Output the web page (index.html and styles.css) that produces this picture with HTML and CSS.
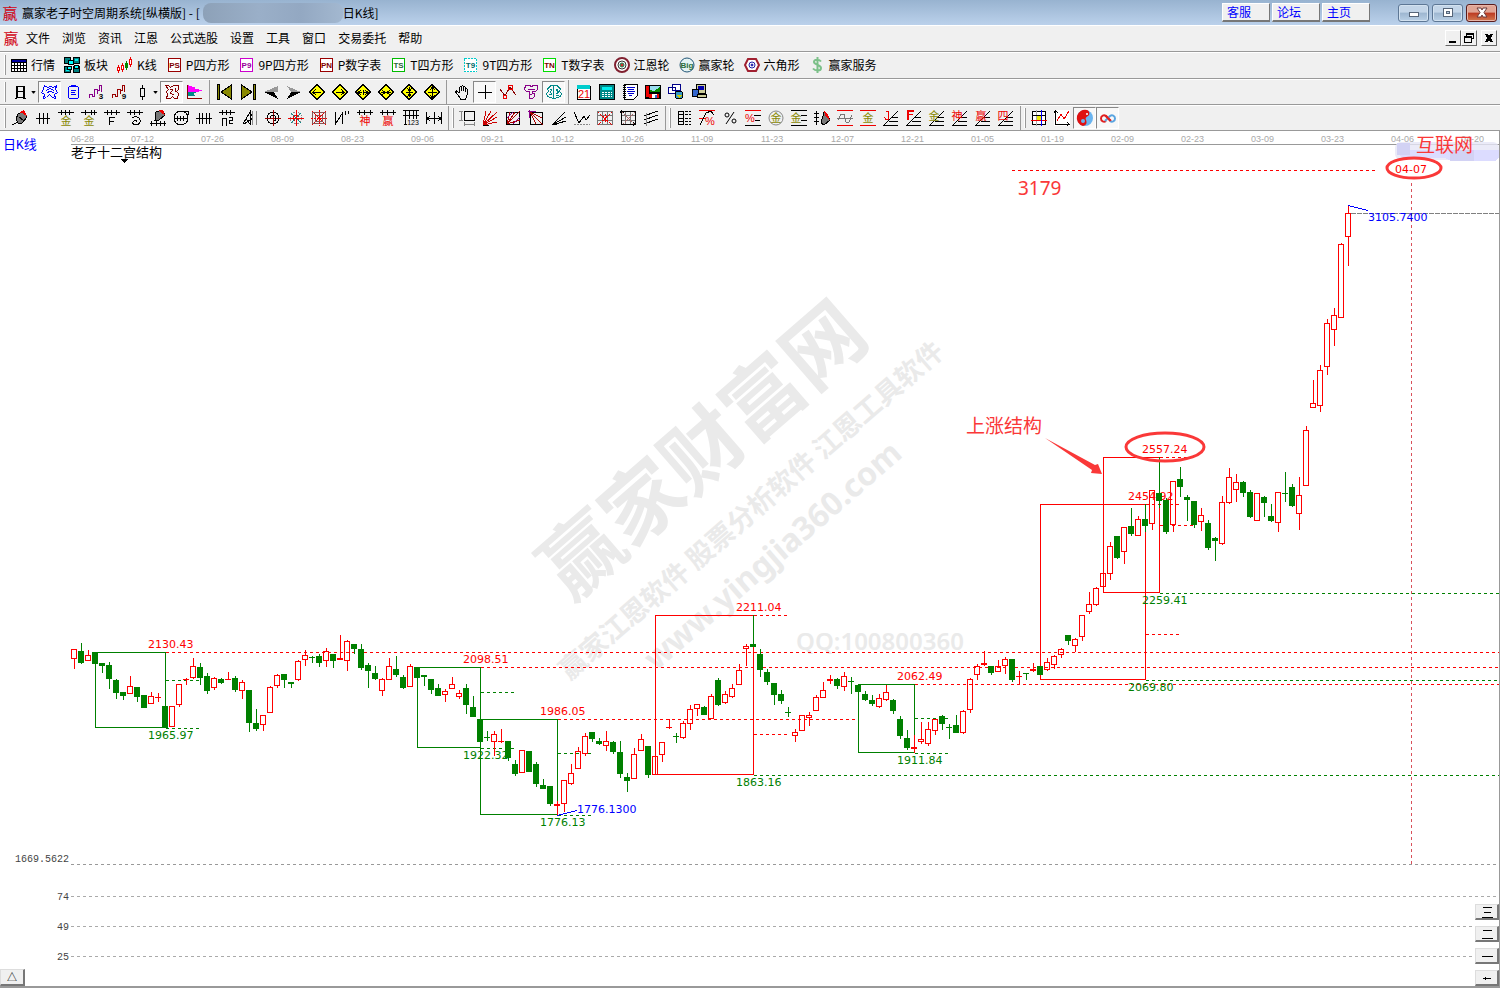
FILE: index.html
```html
<!DOCTYPE html>
<html lang="zh-CN">

<head>
    <meta charset="utf-8">
    <title>赢家老子时空周期系统[纵横版]</title>
    <link rel="stylesheet" href="styles.css">
</head>

<body>
    <!-- 标题栏 -->
    <header class="titlebar">
        <span class="logo">赢</span>
        <h1>赢家老子时空周期系统[纵横版] - [<span class="mask"></span>日K线]</h1>
        <div class="links">
            <button>客服</button>
            <button>论坛</button>
            <button>主页</button>
        </div>
        <div class="winctl">
            <button aria-label="最小化"><svg class="ic" viewBox="0 0 16 16"><rect x="3.5" y="7.5" width="9" height="4" rx="1" fill="#fff" stroke="#566579"/></svg></button>
            <button aria-label="还原"><svg class="ic" viewBox="0 0 16 16"><path d="M3.500 3.500h9v8h-9zM6.500 6.500h3v2h-3z" fill="#fff" fill-rule="evenodd" stroke="#566579"/></svg></button>
            <button class="close" aria-label="关闭"><svg class="ic smooth" viewBox="0 0 16 16"><path d="M3 3h4l1 2 1-2h4l-3 4.500 3 4.500H9L8 10l-1 2H3l3-4.500z" fill="#fff" stroke="#6b3a3a"/></svg></button>
        </div>
    </header>

    <!-- 菜单 -->
    <nav class="menubar">
        <span class="logo">赢</span>
        <a href="#">文件</a>
        <a href="#">浏览</a>
        <a href="#">资讯</a>
        <a href="#">江恩</a>
        <a href="#">公式选股</a>
        <a href="#">设置</a>
        <a href="#">工具</a>
        <a href="#">窗口</a>
        <a href="#">交易委托</a>
        <a href="#">帮助</a>
        <div class="mdi">
            <button aria-label="最小化"><svg viewBox="0 0 12 12"><path d="M2 9h7v2H2z"/></svg></button>
            <button aria-label="还原"><svg viewBox="0 0 12 12"><path d="M3 1h8v6H9v4H1V4h2zM4 3v1h5v2h1V3zM2 6v4h6V6z" fill-rule="evenodd"/></svg></button>
            <button aria-label="关闭"><svg viewBox="0 0 12 12"><path d="M2 2h3l1 2 1-2h3L8 6l2 4H7L6 8l-1 2H2l2-4z"/></svg></button>
        </div>
    </nav>

    <!-- 功能栏 -->
    <div class="toolbar named">
        <i class="grip"></i>
        <button><svg class="ic" viewBox="0 0 16 16"><path d="M0 2h16v13H0z" fill="#000"/><path d="M1 3h14v2H1z" fill="#0000a0"/><path d="M1 6h2v2H1zM4 6h2v2H4zM7 6h2v2H7zM10 6h2v2h-2zM13 6h2v2h-2zM1 9h2v2H1zM4 9h2v2H4zM7 9h2v2H7zM10 9h2v2h-2zM13 9h2v2h-2zM1 12h2v2H1zM4 12h2v2H4zM7 12h2v2H7zM10 12h2v2h-2zM13 12h2v2h-2z" fill="#fff"/></svg>行情</button>
        <button><svg class="ic" viewBox="0 0 16 16"><path d="M.5.5h6v6h-6zM9.500.5h6v6h-6zM.5 9.500h6v6h-6zM9.500 9.500h6v6h-6z" fill="#008080" stroke="#000"/><path d="M4.500 3.500h5v4h-5zM3.500 9.500h4v3h-4zM10.500 8.500h4v3h-4z" fill="#0ff" stroke="#000"/><path d="M11 2h3v2h-3zM2 13h3v1H2z" fill="#0ee"/></svg>板块</button>
        <button><svg class="ic" viewBox="0 0 16 16"><path d="M1.500 8v8M5.500 6v9M13.500 0v10" stroke="#e00"/><path d="M9.500 4v9" stroke="#080"/><path d="M.5 10.500h2v3h-2zM4.500 8.500h2v4h-2zM12.500 2.500h2v5h-2z" fill="#fff" stroke="#e00"/><path d="M8 6h3v5H8z" fill="#080"/></svg>K线</button>
        <button><svg class="ic" viewBox="0 0 16 16"><path d="M2.500 1.500h12v13h-12z" fill="#fff" stroke="#900"/><text x="8.500" y="11" class="t-maroon">PS</text></svg>P四方形</button>
        <button><svg class="ic" viewBox="0 0 16 16"><path d="M2.500 1.500h12v13h-12z" fill="#fff" stroke="#c0c"/><text x="8.500" y="11" class="t-purple">P9</text></svg>9P四方形</button>
        <button><svg class="ic" viewBox="0 0 16 16"><path d="M2.500 1.500h12v13h-12z" fill="#fff" stroke="#900"/><text x="8.500" y="11" class="t-maroon">PN</text></svg>P数字表</button>
        <button><svg class="ic" viewBox="0 0 16 16"><path d="M2.500 1.500h12v13h-12z" fill="#fff" stroke="#0b0"/><text x="8.500" y="11" class="t-green">TS</text></svg>T四方形</button>
        <button><svg class="ic" viewBox="0 0 16 16"><path d="M2.500 1.500h12v13h-12z" fill="#fff" stroke="#0cc" stroke-dasharray="2 1"/><text x="8.500" y="11" class="t-teal">T9</text></svg>9T四方形</button>
        <button><svg class="ic" viewBox="0 0 16 16"><path d="M2.500 1.500h12v13h-12z" fill="#fff" stroke="#0d0"/><text x="8.500" y="11" class="t-maroon">TN</text></svg>T数字表</button>
        <button><svg class="ic smooth" viewBox="0 0 16 16"><circle cx="8" cy="8" r="7" fill="#fff" stroke="#802030" stroke-width="2"/><circle cx="8" cy="8" r="4" stroke="#333"/><circle cx="8" cy="8" r="2" fill="#c33" stroke="#185"/></svg>江恩轮</button>
        <button><svg class="ic smooth" viewBox="0 0 16 16"><circle cx="8" cy="8" r="7" fill="#e5f3f3" stroke="#257"/><text x="8" y="11" class="t-green">Big</text></svg>赢家轮</button>
        <button><svg class="ic smooth" viewBox="0 0 16 16"><path d="M4 2h8l3 6-3 6H4L1 8z" fill="#fff" stroke="#a02030" stroke-width="2"/><circle cx="8" cy="8" r="3" stroke="#22a"/><circle cx="8" cy="8" r="1" fill="#22a" stroke="#22a"/></svg>六角形</button>
        <button><svg class="ic smooth" viewBox="0 0 16 16"><path d="M12 4.500C10 2 5 2 5 5s7 2.500 7 6-6 3-8 .5M8.500 0v16" stroke="#7cc089" stroke-width="2"/></svg>赢家服务</button>
    </div>

    <!-- 周期与操作 -->
    <div class="toolbar">
        <i class="grip"></i>
        <button aria-label="日线"><svg class="ic" viewBox="0 0 16 16"><path d="M4 2h9v12h1v1h-3v-1H5v1H3v-1h1zM6 3v4h5V3zM6 8v5h5V8z" fill="#000" fill-rule="evenodd"/></svg></button>
        <i class="caret"></i>
        <button class="on" aria-label="叠加"><svg class="ic" viewBox="0 0 16 16"><path d="M2.500 1.500l3 2 3-1 3 1 3-2-1 4 2 3-3 2 1 4-3-1-3-3-3 3-3 1 1-4-3-2 2-3zM4 7c2-3 6-3 8 0M5 9l3-2 4 2" stroke="#00f"/></svg></button>
        <button aria-label="记录"><svg class="ic" viewBox="0 0 16 16"><path d="M4.500 2.500h8l1 1v10l-1 1h-8l-1-1v-10zM6 1.500h5M6 6.500h5M6 8.500h4M6 10.500h5" stroke="#00f"/></svg></button>
        <button aria-label="三均"><svg class="ic" viewBox="0 0 16 16"><path d="M1.500 14v-4h3v2h2V5h3v5M9.500 6h2V1h2v7" stroke="#808"/><text x="13" y="15">3</text></svg></button>
        <button aria-label="九均"><svg class="ic" viewBox="0 0 16 16"><path d="M1.500 14v-4h3v2h2V5h3v5M9.500 6h2V1h2v7" stroke="#900"/><text x="13" y="15">9</text></svg></button>
        <button aria-label="K线样式"><svg class="ic" viewBox="0 0 16 16"><path d="M6.500 4.500h4v8h-4zM8.500 1v3M8.500 13v3"/></svg></button>
        <i class="caret"></i>
        <button class="on" aria-label="复权"><svg class="ic" viewBox="0 0 16 16"><path d="M1.500 1.500h3l2 2 3-2h5v4l-2 2 2 2-1 5h-3l-2-2-2 2h-4l1-4-1-3 2-2zM6 5l3 1-3 3 4 2M11 4v4" stroke="#800"/></svg></button>
        <button aria-label="筹码"><svg class="ic" viewBox="0 0 16 16"><path d="M1 1l8 3-2 1 9 1-6 2H1z" fill="#f0f"/><path d="M1 8h9l-4 2 2 2H1z" fill="#088"/><path d="M.5 1v13.500H15" stroke="#800"/></svg></button>
        <i class="sep"></i>
        <button aria-label="最前"><svg class="ic" viewBox="0 0 16 16"><path d="M.5.5h2v15h-2zM14.500 1v14L4 8z" fill="#880" stroke="#000"/></svg></button>
        <button aria-label="最后"><svg class="ic" viewBox="0 0 16 16"><path d="M13.500.5h2v15h-2zM1.500 1v14L12 8z" fill="#880" stroke="#000"/></svg></button>
        <button aria-label="后退"><svg class="ic" viewBox="0 0 16 16"><path d="M1 8l14-6v6z" fill="#999"/><path d="M1 8h10l4 7z" fill="#000"/></svg></button>
        <button aria-label="前进"><svg class="ic" viewBox="0 0 16 16"><path d="M1 2l14 6H5z" fill="#999"/><path d="M1 15l14-7H5z" fill="#000"/></svg></button>
        <button aria-label="左移"><svg class="ic" viewBox="0 0 16 16"><path class="dia" d="M8 .5L15.500 8 8 15.500.5 8z"/><path d="M4 8.500h8M7 5L4 8.500 7 11"/></svg></button>
        <button aria-label="右移"><svg class="ic" viewBox="0 0 16 16"><path class="dia" d="M8 .5L15.500 8 8 15.500.5 8z"/><path d="M4 8.500h8M9 5l3 3.500L9 11"/></svg></button>
        <button aria-label="拉宽"><svg class="ic" viewBox="0 0 16 16"><path class="dia" d="M8 .5L15.500 8 8 15.500.5 8z"/><path d="M3 8.500h4M9 8.500h4M6 6L3 8.500 6 11M10 6l3 2.500-3 2.500M8.500 6v5"/></svg></button>
        <button aria-label="收窄"><svg class="ic" viewBox="0 0 16 16"><path class="dia" d="M8 .5L15.500 8 8 15.500.5 8z"/><path d="M3 8.500h10M4 6l3 2.500L4 11M12 6L9 8.500l3 2.500"/></svg></button>
        <button aria-label="压缩"><svg class="ic" viewBox="0 0 16 16"><path class="dia" d="M8 .5L15.500 8 8 15.500.5 8z"/><path d="M8.500 3v10M5 8.500h7M6 4l2.500 3L11 4M6 13l2.500-3 2.500 3"/></svg></button>
        <button aria-label="拉高"><svg class="ic" viewBox="0 0 16 16"><path class="dia" d="M8 .5L15.500 8 8 15.500.5 8z"/><path d="M8.500 3v10M4 8.500h9M6 6l2.500-3L11 6M6 11l2.500 3 2.500-3"/></svg></button>
        <i class="sep"></i>
        <button aria-label="拖动"><svg class="ic" viewBox="0 0 16 16"><path d="M5.500 9V3.500l1-1 1 1V7V2.500l1-1 1 1V7V3.500l1-1 1 1V8V5.500l1-1 1 1V10l-2 5h-5L4 11 1.500 8l1-1L5.500 9"/></svg></button>
        <button class="on" aria-label="十字光标"><svg class="ic" viewBox="0 0 16 16"><path d="M8.500 1v14M1 8.500h14"/></svg></button>
        <button aria-label="画线"><svg class="ic" viewBox="0 0 16 16"><path d="M0 5l5 7 5-9 6 8" stroke="#800"/><path d="M3.500 11.500h3v3h-3zM8.500 1.500h4v4h-4z" stroke="#e00"/></svg></button>
        <button aria-label="标注"><svg class="ic" viewBox="0 0 16 16"><path d="M2.500 1.500h4l2 1 2-1h4v4l-2 2h-3v2h2v3l-2 2h-3v-4h2M2.500 1.500l-1 4 2 2h3v3M5 5h7" stroke="#808"/></svg></button>
        <button class="on" aria-label="智能分析"><svg class="ic" viewBox="0 0 16 16"><path d="M7.500 2l-3-.5-1 2-2 1 1 3-2 2 1 3 3 1 3 1V2M8.500 2l3-.5 1 2 2 1-1 3 2 2-1 3-3 1-3 1M4 5l2 1-2 2 2 2M12 5l-2 1 3 2-3 2M3 10h3M10 11h3" stroke="#088"/></svg></button>
        <i class="sep"></i>
        <button aria-label="日历"><svg class="ic" viewBox="0 0 16 16"><path d="M1.500 2.500h13v13h-13z" fill="#fff" stroke="#000"/><path d="M1 1h13v4H1z" fill="#0cc"/><text x="8" y="14" class="t-red mid">21</text></svg></button>
        <button aria-label="计算器"><svg class="ic" viewBox="0 0 16 16"><path d="M.5.5h15v15H.5z" fill="#088" stroke="#000"/><path d="M3 3h10v3H3z" fill="#0ee"/><path d="M3 8.500h10M3 10.500h10M3 12.500h10" stroke="#fff" stroke-dasharray="2 1"/></svg></button>
        <button aria-label="记事本"><svg class="ic" viewBox="0 0 16 16"><path d="M2.500.5h13v11l-4 4h-9z" fill="#fff" stroke="#000"/><path d="M2 1v14" stroke-width="3" stroke-dasharray="1 1"/><path d="M5 3.500h8M6 5.500h6M5 7.500h8M6 9.500h6M7 11.500h3" stroke="#00c"/></svg></button>
        <button aria-label="保存"><svg class="ic" viewBox="0 0 16 16"><path d="M0 1h16v14H0z" fill="#000"/><path d="M1 2h3v11H1z" fill="#e00"/><path d="M5 2h10v6H5z" fill="#9de"/><path d="M5 6l4 1 6-4v5H5z" fill="#080"/><path d="M4 10h10v4H4z" fill="#e00"/><path d="M7 10h5v4H7z" fill="#fff"/><path d="M10 11h2v3h-2z" fill="#36c"/></svg></button>
        <button aria-label="网络"><svg class="ic" viewBox="0 0 16 16"><path d="M4.500.5h8v6h-8zM.5 3.500h7v6h-7z" fill="#fff" stroke="#008"/><circle cx="11" cy="11" r="4" fill="#39c" stroke="#000"/><path d="M8 11h6l-3 3z" fill="#cc0"/></svg></button>
        <button aria-label="打印"><svg class="ic" viewBox="0 0 16 16"><path d="M5.500.5h9v9h-9z" fill="#cc9" stroke="#000"/><path d="M7 2h6v4H7z" fill="#00a"/><path d="M1.500 5.500h6v7h-6z" fill="#36c" stroke="#000"/><path d="M6.500 10.500h9v3h-9z" fill="#cc9" stroke="#000"/></svg></button>
    </div>

    <!-- 画线工具 -->
    <div class="toolbar">
        <i class="grip"></i>
        <button aria-label="画笔"><svg class="ic" viewBox="0 0 16 16"><path d="M6 4l6-3 3 6-5 6H6L4 9z" fill="#777" stroke="#000"/><path d="M7 3l5-3 3 6-3-1-1-2z" fill="#e00"/><path d="M7 7l4 3M0 15l6-3"/></svg></button>
        <button aria-label="等分"><svg class="ic" viewBox="0 0 16 16"><path d="M1 8.500h14M4.500 3v11M8.500 3v11M12.500 3v11"/></svg></button>
        <button aria-label="黄金周期"><svg class="ic" viewBox="0 0 16 16"><path d="M0 2.500h16M3.500 0v5M7.500 0v5M11.500 0v5"/><text x="8" y="15" class="zh t-olive">金</text></svg></button>
        <button aria-label="黄金分割"><svg class="ic" viewBox="0 0 16 16"><path d="M0 2.500h16M4.500 0v5M10.500 0v5M13.500 0v5"/><text x="8" y="15" class="zh t-olive">金</text></svg></button>
        <button aria-label="斐波那契"><svg class="ic" viewBox="0 0 16 16"><path d="M0 2.500h16M3.500 0v5M7.500 0v5M12.500 0v5M5.500 15V7.500H11M5.500 11.500h4"/></svg></button>
        <button aria-label="螺旋周期"><svg class="ic" viewBox="0 0 16 16"><path d="M0 2.500h16M3.500 0v5M7.500 0v5M12.500 0v5M5 8c4-3 9 0 8 4s-9 3-7 0 5-1 3 0"/></svg></button>
        <button aria-label="周期尺"><svg class="ic" viewBox="0 0 16 16"><path d="M6 2l6-2 3 5-6 5H5z" fill="#777" stroke="#000"/><path d="M9 0h4l2 5-4-2z" fill="#e00"/><path d="M0 13.500h16M1.500 11v5M6.500 11v5M10.500 11v5M14.500 11v5"/></svg></button>
        <button aria-label="周期圆"><svg class="ic" viewBox="0 0 16 16"><circle cx="8" cy="8" r="7"/><path d="M1 8.500h14M4.500 6v5M7.500 6v5M10.500 6v5M11 1h4v4"/></svg></button>
        <button aria-label="等距线"><svg class="ic" viewBox="0 0 16 16"><path d="M0 8.500h16M3.500 3v11M6.500 3v11M10.500 3v11M13.500 3v11"/></svg></button>
        <button aria-label="平方"><svg class="ic" viewBox="0 0 16 16"><path d="M0 2.500h16M3.500 0v5M7.500 0v5M11.500 0v5M3.500 16V8.500h4V16M10 7.500h3v3h-3v3h4"/></svg></button>
        <button aria-label="三角"><svg class="ic" viewBox="0 0 16 16"><path d="M1 14L8 2v12L4 9zM2 14l9-6-3-6"/><path d="M10.500 1v14M14.500 1v14" stroke="#888"/></svg></button>
        <button aria-label="角度圆"><svg class="ic" viewBox="0 0 16 16"><circle cx="8" cy="8" r="6"/><path d="M8.500 0v16M0 8.500h16" stroke="#900"/><path d="M5 8a3 3 0 1 1 4 3"/></svg></button>
        <button aria-label="江恩轮"><svg class="ic" viewBox="0 0 16 16"><circle cx="8" cy="8" r="6" stroke="#888" stroke-dasharray="2 1"/><path d="M3 3l10 10M13 3L3 13" stroke="#088"/><path d="M8.500 0v16M0 8.500h16" stroke="#e00"/><circle cx="8" cy="8" r="3" stroke="#e00" stroke-dasharray="2 1"/></svg></button>
        <button aria-label="江恩方"><svg class="ic" viewBox="0 0 16 16"><path d="M1.500 2.500h13v11h-13zM4.500 5.500h7v6h-7z" stroke="#855"/><path d="M1 1l14 14M15 1L1 15M8.500 0v16M0 8.500h16" stroke="#e00" stroke-dasharray="2 1"/></svg></button>
        <button aria-label="波段"><svg class="ic" viewBox="0 0 16 16"><path d="M1.500 2v12L8.500 3v11M11.500 1v4M14.500 1v3"/></svg></button>
        <button aria-label="神奇周期"><svg class="ic" viewBox="0 0 16 16"><path d="M0 2.500h16M2.500 0v5M7.500 0v5M13.500 0v5"/><text x="8" y="15" class="zh t-red">神</text></svg></button>
        <button aria-label="赢家周期"><svg class="ic" viewBox="0 0 16 16"><path d="M0 2.500h16M2.500 0v5M7.500 0v5M13.500 0v5"/><text x="8" y="15" class="zh t-red">赢</text></svg></button>
        <button aria-label="数字尺"><svg class="ic" viewBox="0 0 16 16"><path d="M0 .5h16M0 5.500h16M2.500 1v13M6.500 1v8M10.500 1v8M13.500 1v8M1 14.500h3"/><text x="10" y="15" class="tiny">123</text></svg></button>
        <button aria-label="间距"><svg class="ic" viewBox="0 0 16 16"><path d="M.5 2v12M8.500 2v12M15.500 2v12M1 8.500h14M4 6L1 8.500 4 11M12 6l3 2.500-3 2.500"/></svg></button>
        <i class="sep"></i>
        <i class="grip"></i>
        <button aria-label="量度框"><svg class="ic" viewBox="0 0 16 16"><path d="M5.500 1.500h10v9h-10z"/><path d="M0 1.500h4M0 10.500h4M2.500 2v9M5.500 12v4M15.500 12v4M5 14.500h10" stroke="#888"/></svg></button>
        <button aria-label="扇形线"><svg class="ic" viewBox="0 0 16 16"><path d="M1 15L4 1M1 15L9 1M1 15L15 2M1 15l14-8M1 15l14-3" stroke="#c00"/><path d="M1 15h6"/></svg></button>
        <button aria-label="扇形箱"><svg class="ic" viewBox="0 0 16 16"><path d="M1.500 2.500h13v12h-13z"/><path d="M2 14L5 2M2 14L15 1M2 14l13-4M2 14L10 2" stroke="#a00"/><path d="M2 8L8 2M8 14l7-7" stroke="#808"/></svg></button>
        <button aria-label="反扇形"><svg class="ic" viewBox="0 0 16 16"><path d="M2.500 2.500h12v12h-12z"/><path d="M2 2l13 13M2 2l6 12M2 2l12 6" stroke="#a00"/><path d="M0 1.500h8M1.500 0v8" stroke="#808"/></svg></button>
        <button aria-label="射线"><svg class="ic" viewBox="0 0 16 16"><path d="M1 15L14 2M1 15l14-8M1 15l14-4M1 14.500h5"/></svg></button>
        <button aria-label="折线"><svg class="ic" viewBox="0 0 16 16"><path d="M0 2l5 11 5-7 2 4 4-5"/><path d="M0 14.500h16" stroke="#888" stroke-dasharray="2 1"/></svg></button>
        <button aria-label="网格"><svg class="ic" viewBox="0 0 16 16"><path d="M.5 1.500h15v13H.5zM5.500 1v14M10.500 1v14M0 5.500h16M0 10.500h16" stroke="#777"/><path d="M1 2l14 13M15 2L1 15M8 4v9" stroke="#e00" stroke-dasharray="2 1"/></svg></button>
        <button aria-label="箭头网格"><svg class="ic" viewBox="0 0 16 16"><path d="M5.500 1v14M10.500 1v14M1 5.500h14M1 10.500h14" stroke="#777"/><path d="M2 2l13 13M15 2L2 15" stroke="#a66" stroke-dasharray="2 1"/><path d="M1.500 1v13.500H15M0 3l1.500-2L4 3M13 12l2 2.500-2 1.500M2 1.500h13v12"/></svg></button>
        <button aria-label="平行线"><svg class="ic" viewBox="0 0 16 16"><path d="M1 6l14-5M1 10l14-5M1 14l14-5"/><path d="M3.500 3v13" stroke="#888"/></svg></button>
        <i class="sep"></i>
        <i class="grip"></i>
        <button aria-label="价格尺"><svg class="ic" viewBox="0 0 16 16"><path d="M2.500 1v14M7.500 1v14M2 1.500h5M2 4.500h5M2 8.500h5M2 11.500h5M2 14.500h5"/><path d="M9 1.500h6M9 4.500h6M9 8.500h6M9 11.500h6M9 14.500h6" stroke-dasharray="3 1"/></svg></button>
        <button aria-label="百分比线"><svg class="ic" viewBox="0 0 16 16"><path d="M0 .5h16M0 8.500h7" stroke="#e00"/><path d="M1 15L7 3l5-2 3 4"/><text x="11" y="15" class="mid t-red">%</text></svg></button>
        <button aria-label="百分比"><svg class="ic smooth" viewBox="0 0 16 16"><path d="M12 2L4 14"/><circle cx="5" cy="5" r="2"/><circle cx="12" cy="11" r="2"/></svg></button>
        <button aria-label="百分比档"><svg class="ic" viewBox="0 0 16 16"><path d="M0 .5h16" stroke="#e00"/><path d="M9 5.500h7M10 10.500h5M0 15.500h16"/><text x="5" y="12" class="mid t-red">%</text></svg></button>
        <button aria-label="黄金圆"><svg class="ic smooth" viewBox="0 0 16 16"><circle cx="8" cy="8" r="7" stroke="#888"/><text x="8" y="12" class="zh t-olive">金</text></svg></button>
        <button aria-label="黄金档"><svg class="ic" viewBox="0 0 16 16"><path d="M0 .5h16M10 5.500h6M10 10.500h6M0 15.500h16"/><text x="5" y="12" class="zh t-olive">金</text></svg></button>
        <button aria-label="价格笔"><svg class="ic" viewBox="0 0 16 16"><path d="M2.500 1v14M0 3.500h5M0 7.500h5M0 11.500h5"/><path d="M10 2l3 2 3 6-6 5-3-2z" fill="#777" stroke="#000"/><path d="M10 1l4 4 2 5-4-3z" fill="#e00"/></svg></button>
        <button aria-label="波浪"><svg class="ic" viewBox="0 0 16 16"><path d="M0 .5h16M0 15.500h16" stroke="#e00"/><path d="M1 10l3-6h3l2 8h3l3-7M0 8.500h16" stroke="#777"/></svg></button>
        <button aria-label="黄金带"><svg class="ic" viewBox="0 0 16 16"><path d="M0 .5h16M0 15.500h16" stroke="#e00"/><text x="8" y="12" class="zh t-olive">金</text></svg></button>
        <button aria-label="J线"><svg class="ic" viewBox="0 0 16 16"><path d="M1 15L15 1M6 11.500h9M9 7.500h6M0 15.500h15"/><path d="M5.500 1v8h-3l-1-2M3 1.500h3" stroke="#e00"/></svg></button>
        <button aria-label="F线"><svg class="ic" viewBox="0 0 16 16"><path d="M1 15L15 1M6 11.500h9M9 7.500h6M0 15.500h15"/><path d="M2 0h6v2H3v2h4v1H3v5H1V0z" fill="#e00"/></svg></button>
        <button aria-label="金线"><svg class="ic" viewBox="0 0 16 16"><path d="M1 15L15 1M6 11.500h9M9 7.500h6M0 15.500h15"/><text x="5" y="10" class="zh t-olive">金</text></svg></button>
        <button aria-label="神线"><svg class="ic" viewBox="0 0 16 16"><path d="M1 15L15 1M6 11.500h9M9 7.500h6M0 15.500h15"/><text x="5" y="10" class="zh t-red">神</text></svg></button>
        <button aria-label="赢线"><svg class="ic" viewBox="0 0 16 16"><path d="M1 15L15 1M6 11.500h9M9 7.500h6M0 15.500h15"/><text x="6" y="10" class="zh t-red">赢</text></svg></button>
        <button aria-label="四线"><svg class="ic" viewBox="0 0 16 16"><path d="M1 15L15 1M6 11.500h9M9 7.500h6M0 15.500h15"/><text x="5" y="10" class="zh t-red">四</text></svg></button>
        <i class="sep"></i>
        <i class="grip"></i>
        <button aria-label="方阵"><svg class="ic" viewBox="0 0 16 16"><path d="M1.500 1.500h13v13h-13z" fill="#fff" stroke="#000"/><path d="M6 5h5v5H6z" fill="#ee0"/><path d="M5.500 0v16" stroke="#aaa"/><path d="M1 5.500h14"/><path d="M0 10.500h16" stroke="#e00"/><path d="M10.500 0v16" stroke="#00f"/></svg></button>
        <button aria-label="走势"><svg class="ic" viewBox="0 0 16 16"><path d="M0 0h16v16H0z" fill="#fff"/><path d="M1.500 0v14.500H15M0 3l1.500-2L4 3M13 12l2 2.500-2 1.500"/><path d="M3 11l4-7 3 5 5-8" stroke="#e00"/></svg></button>
        <button class="on" aria-label="太极"><svg class="ic smooth" viewBox="0 0 16 16"><circle cx="8" cy="8" r="8" fill="#6ab4f0"/><path d="M10 0a8 8 0 1 0-4 16c4-1 4-4 3-6s0-3 2-4 2-5-1-6z" fill="#e01010"/><circle cx="6" cy="11" r="2" fill="#6ab4f0"/><circle cx="10" cy="4" r="1" fill="#fff"/></svg></button>
        <button class="on" aria-label="无穷"><svg class="ic smooth" viewBox="0 0 16 16"><path d="M6 11c-2 1.500-5 .5-5-2.500s3-4 5-2.500l5 5" stroke="#e02020" stroke-width="2"/><path d="M5 11l5-5c2-1.500 5-.5 5 2.500s-3 4-5 2.500" stroke="#5aa4e0" stroke-width="2"/><path d="M5.500 5.500l5 5.500" stroke="#e02020" stroke-width="2"/></svg></button>
    </div>

    <!-- K线图 -->
    <main class="chart">
        <svg class="plot" id="plot" viewBox="0 131 1499 855">
            <g class="watermark">
                <text class="wm-big" transform="translate(702 449) rotate(-41)" y="30">赢家财富网</text>
                <text class="wm-mid" transform="translate(751 510) rotate(-41)" y="10">赢家江恩软件 股票分析软件 江恩工具软件</text>
                <text class="wm-url" transform="translate(774 557) rotate(-41)" y="9">www.yingjia360.com</text>
                <text class="wm-qq" x="796" y="650">QQ:100800360</text>
            </g>
            <g id="axis">
                <path class="axis-line" d="M71 144.500H1499"/>
            </g>
            <text class="period" x="3" y="149">日K线</text>
            <text class="name" x="71" y="157">老子十二宫结构</text>
            <path d="M121 159h7l-3.500 4z"/>
            <g class="scale">
                <text x="69" y="862">1669.5622</text>
                <text x="69" y="900">74</text>
                <text x="69" y="930">49</text>
                <text x="69" y="960">25</text>
                <path class="dash dark" d="M71 864.500H1497"/>
                <path class="dash" d="M71 896.500H1497M71 926.500H1473M71 956.500H1473"/>
            </g>
            <g id="structures"></g>
            <g id="candles"></g>
            <g class="forecast">
                <path class="dash red" d="M1012 170.500H1376"/>
                <path class="dash time" d="M1411.500 183V864"/>
                <path class="last" d="M1351 213.500H1499"/>
                <path class="blue" d="M1348 205.500L1368 210.500M557 815.500L577 810.500"/>
                <text class="blue-text" x="1368" y="221">3105.7400</text>
                <text class="blue-text" x="577" y="813">1776.1300</text>
                <text class="up" x="1395" y="173">04-07</text>
            </g>
            <g class="notes">
                <rect class="mosaic-a" x="1395" y="142" width="104" height="18" rx="6"/>
                <path class="mosaic-b" d="M1399 150h100v8l-4 3h-44l-6-3h-42l-4-3z"/>
                <path class="mosaic-c" d="M1450 150h24v11h-24zM1397 143h13v12h-13z"/>
                <text x="1416" y="152">互联网</text>
                <text x="1018" y="195" class="num">3179</text>
                <text x="966" y="433">上涨结构</text>
                <ellipse cx="1414" cy="168" rx="27" ry="10"/>
                <ellipse cx="1165" cy="447" rx="39" ry="14"/>
                <path class="arrow" d="M1045 438l50 27 3-1 4 10-11-1 1-3z"/>
            </g>
        </svg>
        <button class="expand" aria-label="展开">△</button>
        <div class="panes">
            <button aria-label="三窗口"><svg viewBox="0 0 12 12"><path d="M2 1h9v1H2zM3 6h7v1H3zM1 11h11v1H1z"/></svg></button>
            <button aria-label="二窗口"><svg viewBox="0 0 12 12"><path d="M2 2h9v1H2zM1 10h11v1H1z"/></svg></button>
            <button aria-label="一窗口"><svg viewBox="0 0 12 12"><path d="M1 6h11v1H1z"/></svg></button>
            <button aria-label="返回"><svg viewBox="0 0 12 12"><path d="M2 6h2V5h1v1h5v1H5v1H4V7H2z"/></svg></button>
        </div>
    </main>
    <script src="chart.js"></script>
</body>

</html>
```
FILE: styles.css
```css
* {
    box-sizing: border-box;
}

body {
    margin: 0;
    background: #fff;
    color: #000;
    font-family: "Noto Sans CJK SC", "Liberation Sans", sans-serif;
    font-size: 12px;
    line-height: 16px;
}

button {
    margin: 0;
    padding: 0;
    border: none;
    background: none;
    color: inherit;
    font: inherit;
}

.logo {
    width: 16px;
    color: #d00010;
    font-size: 15px;
    text-align: center;
}

/* 标题栏 */
.titlebar {
    display: flex;
    align-items: center;
    height: 25px;
    padding: 0 3px 0 2px;
    background: linear-gradient(#98b3d0, #bbd1eb);
}

.titlebar h1 {
    display: flex;
    align-items: center;
    margin: 0 auto 0 4px;
    font-size: 12px;
    font-weight: normal;
    white-space: nowrap;
}

.mask {
    width: 140px;
    height: 20px;
    margin-left: 3px;
    border-radius: 8px;
    background: linear-gradient(90deg, #8da1b8, #9aafc8 40%, #93a8c2 70%, #a3b8d0);
}

.links {
    display: flex;
    gap: 2px;
    margin-right: 28px;
}

.links button {
    width: 48px;
    height: 19px;
    padding-left: 4px;
    border: 1px solid #fff;
    border-right-color: #777;
    border-bottom: 2px solid #777;
    background: #f0f0f0;
    color: #00f;
    text-align: left;
}

.winctl {
    display: flex;
    gap: 3px;
}

.winctl button {
    display: flex;
    align-items: center;
    justify-content: center;
    width: 31px;
    height: 18px;
    border: 1px solid #5d7795;
    border-radius: 3px;
    background: linear-gradient(#c3d5e8 45%, #9db6d0 50%, #b9d0e6);
    box-shadow: inset 0 0 0 1px #d3e2f0;
}

.winctl .close {
    border-color: #5a1c1c;
    background: linear-gradient(#e0a595 45%, #bc3a22 50%, #d27a50);
    box-shadow: inset 0 0 0 1px #e8b5a8;
}

/* 菜单 */
.menubar {
    display: flex;
    align-items: center;
    gap: 12px;
    height: 27px;
    padding: 0 3px 2px;
    border-top: 1px solid #fff;
    border-bottom: 1px solid #999;
    background: #f0f0f0;
}

.menubar .logo {
    margin-right: -5px;
}

.menubar a {
    color: #000;
    text-decoration: none;
}

.mdi {
    display: flex;
    margin-left: auto;
}

.mdi button {
    display: flex;
    align-items: center;
    justify-content: center;
    width: 16px;
    height: 16px;
    border: 1px solid #fff;
    border-right-color: #666;
    border-bottom-color: #666;
    background: #f0f0f0;
}

.mdi button:last-child {
    margin-left: 4px;
}

.mdi svg,
.panes svg {
    width: 12px;
    height: 12px;
    shape-rendering: crispEdges;
}

/* 工具栏 */
.toolbar {
    display: flex;
    align-items: center;
    height: 26px;
    padding-left: 4px;
    border-top: 1px solid #fff;
    border-bottom: 1px solid #999;
    background: #f0f0f0;
}

.toolbar button {
    display: flex;
    flex: none;
    align-items: center;
    justify-content: center;
    width: 23px;
    height: 22px;
}

.toolbar .on {
    border: 1px solid #fff;
    border-top-color: #888;
    border-left-color: #888;
    background: #f8f8f8;
}

.named {
    height: 27px;
    padding-bottom: 2px;
}

.toolbar.named button {
    gap: 4px;
    width: auto;
    margin-right: 9px;
    white-space: nowrap;
}

.toolbar.named .grip {
    margin-right: 5px;
}

.grip {
    width: 2px;
    height: 20px;
    margin-right: 2px;
    border-right: 1px solid #999;
    background: #fff;
}

.sep {
    align-self: stretch;
    width: 1px;
    margin: 0 3px;
    background: #999;
}

.sep + .grip {
    margin-right: 1px;
}

.caret {
    width: 7px;
    height: 3px;
    background: #000;
    clip-path: polygon(0 0, 5px 0, 3px 3px, 2px 3px);
}

.ic {
    flex: none;
    width: 16px;
    height: 16px;
    overflow: visible;
    fill: none;
    stroke: #000;
    shape-rendering: crispEdges;
}

.ic [fill]:not([stroke]) {
    stroke: none;
}

.smooth {
    shape-rendering: auto;
}

.ic text {
    fill: #000;
    stroke: none;
    font-family: "Liberation Sans", sans-serif;
    font-size: 8px;
    font-weight: bold;
    text-anchor: middle;
}

.ic .zh {
    font-family: "Noto Sans CJK SC", sans-serif;
    font-size: 11px;
    font-weight: normal;
}

.ic .mid {
    font-size: 11px;
    font-weight: normal;
}

.ic .tiny {
    font-size: 7px;
    font-weight: normal;
}

.ic .t-maroon {
    fill: #800000;
}

.ic .t-purple {
    fill: #909;
}

.ic .t-green {
    fill: #286a38;
}

.ic .t-teal {
    fill: #066;
}

.ic .t-olive {
    fill: #880;
}

.ic .t-red {
    fill: #e00;
}

.ic .dia {
    fill: #ff0;
}

/* K线图 */
.chart {
    position: relative;
    border-right: 1px solid #999;
    border-bottom: 2px solid #999;
}

.plot {
    display: block;
    width: 100%;
    height: auto;
    fill: #000;
}

.plot path {
    shape-rendering: crispEdges;
}

.plot text {
    font-family: "DejaVu Sans", sans-serif;
    font-size: 11px;
}

.plot .watermark text {
    fill: #eaeaea;
    font-family: "Noto Sans CJK SC", sans-serif;
    font-weight: bold;
    text-anchor: middle;
}

.plot .watermark .wm-big {
    font-size: 80px;
}

.plot .watermark .wm-mid {
    font-size: 27px;
}

.plot .watermark .wm-url {
    font-family: "Noto Sans", sans-serif;
    font-size: 32px;
}

.plot .watermark .wm-qq {
    font-family: "Noto Sans", sans-serif;
    font-size: 24px;
    font-weight: 600;
    text-anchor: start;
}

#axis text {
    fill: #aaa;
    font-family: "Liberation Sans", sans-serif;
    font-size: 9px;
}

.axis-line {
    stroke: #999;
}

.plot .period,
.plot .name {
    font-family: "Liberation Mono", "Noto Sans CJK SC", monospace;
    font-size: 13px;
}

.plot .period {
    fill: #00f;
}

.scale text {
    fill: #444;
    font-family: "Liberation Mono", monospace;
    font-size: 10px;
    text-anchor: end;
}

.dash {
    fill: none;
    stroke: #aaa;
    stroke-dasharray: 3 3;
}

.dark {
    stroke: #999;
}

.red {
    stroke: #f00;
}

.green {
    stroke: #008000;
}

.time {
    stroke: #d9505a;
}

.last {
    stroke: #808080;
    stroke-dasharray: 5 1;
}

.blue {
    fill: none;
    stroke: #00f;
}

.plot .blue-text {
    fill: #00f;
}

.plot .up {
    fill: #f00;
}

.plot .down {
    fill: #008000;
}

.box {
    fill: none;
    shape-rendering: crispEdges;
}

.candle-up {
    fill: none;
    stroke: #f00;
}

.candle-down {
    fill: #008000;
    stroke: #008000;
}

.plot .notes text {
    fill: #fa3838;
    font-family: "Noto Sans CJK SC", sans-serif;
    font-size: 19px;
}

.plot .notes .num {
    font-family: "Noto Sans", sans-serif;
}

.notes ellipse {
    fill: none;
    stroke: #fa3838;
    stroke-width: 3;
}

.plot .arrow {
    fill: #fa3838;
    shape-rendering: auto;
}

.mosaic-a {
    fill: #e6e6f6;
    opacity: 0.8;
}

.mosaic-b {
    fill: #dcdcff;
}

.mosaic-c {
    fill: #d2d2f4;
}

.expand,
.panes button {
    border: 1px solid #ddd;
    border-right: 2px solid #777;
    border-bottom: 2px solid #777;
    background: #f0f0f0;
}

.expand {
    position: absolute;
    bottom: 0;
    left: 0;
    width: 25px;
    height: 17px;
    font-size: 10px;
    line-height: 12px;
}

.panes {
    position: absolute;
    right: 0;
    bottom: 0;
    display: flex;
    flex-direction: column;
    gap: 6px;
}

.panes button {
    display: flex;
    align-items: center;
    justify-content: center;
    width: 24px;
    height: 16px;
}
```
FILE: chart.js
```js
const NS = "http://www.w3.org/2000/svg";

// 每根K线: 颜色 最高 实体上沿 实体下沿 最低
const bars = `
r649 649 659 669,g643 651 663 664,r650 655 661 661,g652 652 664 664,g663 663 666 673,g662 665 679 689,
g679 680 693 699,g692 692 696 700,r676 686 694 694,g687 687 697 702,g695 695 708 708,r692 696 704 704,
r693 697 698 702,g706 706 728 728,r706 706 727 727,r684 684 705 707,r678 679 680 685,r658 666 678 679,
g663 667 678 685,g673 676 691 694,r677 678 688 690,g678 679 683 684,r672 679 680 680,g676 678 690 692,
r680 682 691 699,g690 690 723 732,g709 723 729 731,r715 715 725 731,r686 687 713 713,r674 675 686 688,
g674 674 680 688,g682 682 684 688,r660 661 680 681,r650 655 660 666,g656 657 658 663,g654 656 663 667,
r648 651 661 667,g654 654 661 668,r635 658 660 660,r640 641 661 671,g644 644 649 654,g644 649 668 670,
g663 665 671 688,g666 673 679 680,r678 679 691 696,r658 666 680 680,g656 669 675 677,g675 677 688 689,
r664 666 687 687,g667 667 678 678,g675 675 677 686,g679 679 690 694,g684 688 696 696,r689 691 695 702,
r677 684 689 689,r690 693 697 699,g684 688 705 714,g696 707 717 717,g719 719 742 742,g731 737 738 741,
r731 734 742 756,r729 741 742 743,g741 741 758 761,g760 764 774 776,r750 750 773 773,g751 751 772 772,
g762 764 784 787,g779 785 789 789,g786 786 804 806,r801 804 806 815,r780 780 804 812,r764 773 784 785,
r747 751 769 769,r733 736 754 756,g732 732 739 742,g738 741 744 745,r731 741 746 751,g741 742 752 754,
g741 752 774 778,g773 777 781 792,r748 754 779 779,r734 739 751 751,g746 746 775 778,r756 756 775 775,
r742 742 755 762,r719 727 728 729,g733 736 737 743,r721 723 738 739,r705 709 724 730,r704 704 709 716,
g706 707 715 715,r694 696 719 719,g678 680 705 706,r691 694 703 704,r684 688 697 698,r664 670 685 685,
r644 646 649 666,g615 644 647 647,g649 654 670 677,g669 672 682 685,g683 683 695 705,g690 694 701 704,
g707 712 713 717,r729 732 736 742,r715 715 731 731,r712 715 718 726,r695 697 711 711,r682 690 698 698,
r675 679 681 684,g678 679 686 689,r672 676 687 691,g677 681 682 694,g685 685 692 692,g691 694 700 701,
g695 700 704 706,r694 698 707 708,r685 692 700 701,g699 700 711 714,g716 719 736 739,g730 738 748 750,
r735 747 749 753,r722 739 742 744,r722 729 744 746,r719 719 731 735,g715 716 724 730,g724 727 728 739,
g715 725 733 733,r710 711 733 734,r678 679 710 713,r664 666 675 680,r651 663 665 666,g666 666 673 675,
r660 666 672 672,r657 659 666 674,g659 659 680 682,r671 676 677 684,g673 673 674 680,r663 669 671 672,
g666 666 675 675,r658 662 670 671,r655 656 665 669,r648 649 655 658,g635 635 641 645,r638 639 646 652,
r615 615 637 641,r592 604 612 614,r587 588 605 606,r573 573 587 587,r542 546 574 580,g536 536 558 559,
r527 527 552 564,g508 526 534 536,r516 519 536 536,g504 519 526 532,r490 490 524 530,g457 493 501 508,
g498 500 532 534,r481 481 525 532,g467 479 487 497,g495 497 500 521,g501 501 525 528,r508 515 522 531,
g520 523 548 550,g537 538 541 561,r496 502 544 545,r468 477 503 504,r474 482 490 502,g481 482 493 497,
g490 492 517 518,r493 493 521 521,g496 497 503 517,g504 516 521 522,r492 492 523 532,g472 493 494 502,
g484 487 506 507,r477 495 514 530,r426 430 486 486,r380 403 408 408,r365 370 406 412,r319 323 367 375,
r308 315 330 346,r243 244 318 318,r205 213 237 266`;

// 结构框: 颜色 左 上 右 下, 高点/低点数值, 延长线 [y, 终点, 颜色]
const boxes = [
    ["green", 95, 652, 165, 727, "2130.43", "1965.97", [[652, 1499, "red"], [680, 199, "green"], [728, 199, "green"]]],
    ["green", 417, 667, 480, 747, "2098.51", "1922.32", [[667, 1499, "red"], [692, 514, "green"], [748, 514, "green"]]],
    ["green", 480, 719, 557, 814, "1986.05", "1776.13", [[719, 858, "red"], [753, 591, "green"], [815, 591, "green"]]],
    ["red", 655, 615, 753, 774, "2211.04", "1863.16", [[615, 787, "red"], [734, 787, "red"], [775, 1499, "green"]]],
    ["green", 858, 684, 914, 752, "2062.49", "1911.84", [[684, 1499, "red"], [718, 948, "green"], [753, 948, "green"]]],
    ["red", 1040, 504, 1145, 679, "2454.92", "2069.80", [[504, 1179, "red"], [634, 1179, "red"], [680, 1499, "green"]]],
    ["red", 1103, 457, 1159, 592, "2557.24", "2259.41", [[457, 1187, "red"], [525, 1193, "red"], [593, 1499, "green"]]]
];

const dates = ["06-28", "07-12", "07-26", "08-09", "08-23", "09-06", "09-21", "10-12", "10-26", "11-09", "11-23",
    "12-07", "12-21", "01-05", "01-19", "02-09", "02-23", "03-09", "03-23", "04-06", "04-20"];

function add(parent, tag, attrs, text) {
    const el = document.createElementNS(NS, tag);
    for (const key in attrs) el.setAttribute(key, attrs[key]);
    if (text) el.textContent = text;
    parent.appendChild(el);
}

// 第一个日期贴左边, 其余每10根K线一个
const axis = document.getElementById("axis");
dates.forEach((d, i) => add(axis, "text", { x: Math.max(71, 61 + i * 70), y: 142 }, d));

const structures = document.getElementById("structures");
boxes.forEach(([color, l, t, r, b, high, low, rays]) => {
    rays.forEach(([y, end, c]) => add(structures, "path", { class: "dash " + c, d: `M${r + 1} ${y + 0.5}H${end}` }));
    add(structures, "rect", { class: "box " + color, x: l + 0.5, y: t + 0.5, width: r - l, height: b - t });
    add(structures, "text", { class: "up", x: r - 17, y: t - 4 }, high);
    add(structures, "text", { class: "down", x: r - 17, y: b + 12 }, low);
});

const candles = document.getElementById("candles");
bars.trim().split(/,\s*/).forEach((row, i) => {
    const [high, top, bottom, low] = row.slice(1).split(" ").map(Number);
    const x = 74 + i * 7;
    const cls = row[0] === "r" ? "candle-up" : "candle-down";
    let d = `M${x + 0.5} ${high}V${top}M${x + 0.5} ${bottom}V${low}`;
    if (bottom - top < 2) {
        d += `M${x - 3} ${top + 0.5}h6`;
    } else {
        d += `M${x - 2.5} ${top + 0.5}h5v${bottom - top - 1}h-5z`;
    }
    add(candles, "path", { class: cls, d: d });
});
```
